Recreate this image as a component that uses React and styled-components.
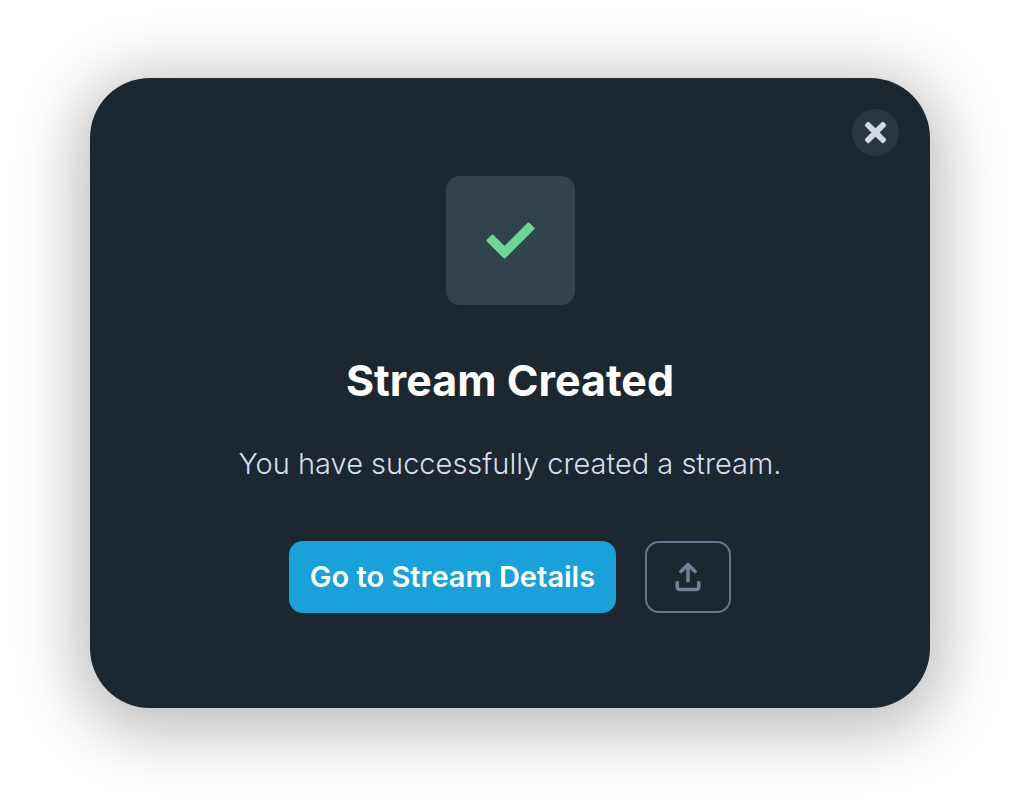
import React from "react";
import styled, { createGlobalStyle } from "styled-components";

const GlobalStyle = createGlobalStyle`
  * { box-sizing: border-box; }
  body { margin: 0; background: #fff; font-family: Inter, "Liberation Sans", sans-serif; }
`;

const Page = styled.main`
  min-height: 100vh;
  padding: 78px 90px 102px;
`;

const Dialog = styled.section`
  display: flex;
  flex-direction: column;
  align-items: center;
  padding: 31px 31px 95px;
  border-radius: 60px;
  background: #1c2730;
  box-shadow: 0 11px 62px 15px rgba(0, 0, 0, 0.25);
`;

const CloseButton = styled.button`
  display: grid;
  place-items: center;
  align-self: flex-end;
  width: 47px;
  height: 47px;
  padding: 0;
  border: 0;
  border-radius: 50%;
  background: #2b3640;
  cursor: pointer;
`;

const StatusTile = styled.div`
  display: grid;
  place-items: center;
  width: 129px;
  height: 129px;
  margin-top: 20px;
  border-radius: 14px;
  background: #32444b;
`;

const Title = styled.h1`
  margin: 47px 0 0;
  color: #fff;
  font-size: 43px;
  font-weight: 700;
  line-height: 56px;
`;

const Message = styled.p`
  margin: 36px 0 0;
  color: #d5dee8;
  font-size: 29px;
  font-weight: 300;
  line-height: 40px;
`;

const Actions = styled.div`
  display: flex;
  gap: 29px;
  margin-top: 57px;
`;

const ActionButton = styled.button`
  display: flex;
  align-items: center;
  justify-content: center;
  height: 72px;
  padding: 0 ${(p) => (p.$outline ? 28 : 21)}px;
  border: ${(p) => (p.$outline ? "2px solid #66778b" : "0")};
  border-radius: 14px;
  background: ${(p) => (p.$outline ? "transparent" : "#19a2da")};
  color: #fff;
  font: 600 29px/40px Inter, "Liberation Sans", sans-serif;
  white-space: nowrap;
  cursor: pointer;
`;

export default function App() {
  return (
    <>
      <GlobalStyle />
      <Page>
        <Dialog role="dialog" aria-labelledby="dialog-title">
          <CloseButton type="button" aria-label="Close">
            <svg width="23" height="23" viewBox="0 0 23 23" fill="#d1dae4" stroke="#d1dae4" strokeWidth="3" strokeLinejoin="round">
              <path d="M4.2 2.3 11.5 9.4 18.8 2.3 20.7 4.2 13.6 11.5 20.7 18.8 18.8 20.7 11.5 13.6 4.2 20.7 2.3 18.8 9.4 11.5 2.3 4.2Z" />
            </svg>
          </CloseButton>
          <StatusTile>
            <svg width="49" height="37" viewBox="0 0 49 37" fill="#6fd598" stroke="#6fd598" strokeWidth="3" strokeLinejoin="round">
              <path d="M2 18.5 6.5 14 18.5 26 42.5 2 47 6.5 18.5 35Z" />
            </svg>
          </StatusTile>
          <Title id="dialog-title">Stream Created</Title>
          <Message>You have successfully created a stream.</Message>
          <Actions>
            <ActionButton type="button">Go to Stream Details</ActionButton>
            <ActionButton type="button" $outline aria-label="Share">
              <svg width="26" height="30" viewBox="0 0 26 30" fill="none" stroke="#718096" strokeWidth="3.6" strokeLinecap="round" strokeLinejoin="round">
                <path d="M2.2 20.5v4q0 3 3 3h15.6q3 0 3-3v-4M13 19V3M6 9.5l7-7 7 7" />
              </svg>
            </ActionButton>
          </Actions>
        </Dialog>
      </Page>
    </>
  );
}
